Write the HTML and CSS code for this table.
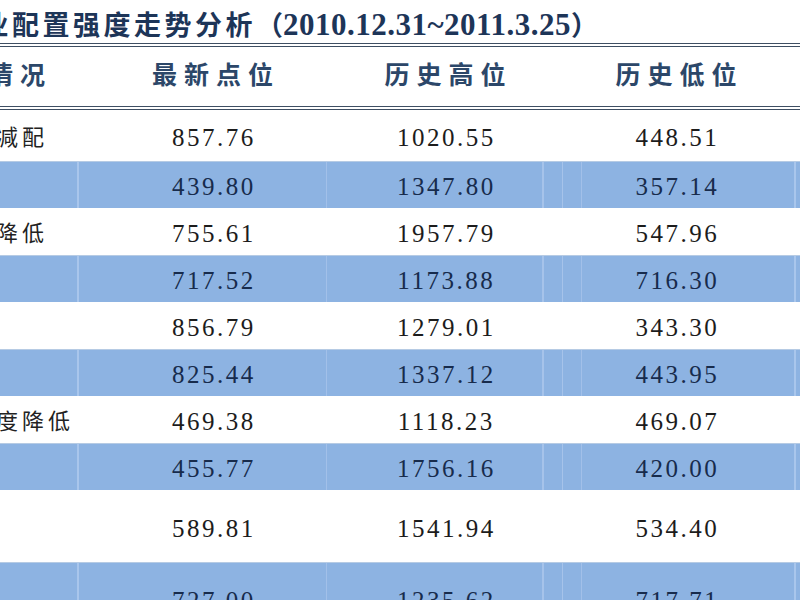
FILE: index.html
```html
<!DOCTYPE html>
<html lang="zh-CN">
<head>
<meta charset="utf-8">
<title>行业配置强度走势分析</title>
<link rel="stylesheet" href="styles.css">
</head>
<body>
<div class="page">
  <h1 class="title">行业配置强度走势分析<span class="paren">（</span><span class="en">2010.12.31~2011.3.25</span><span class="paren">）</span></h1>
  <div class="table">
    <div class="head">
      <div class="hcell first"><span>配置情况</span></div>
      <div class="hcell">最新点位</div>
      <div class="hcell">历史高位</div>
      <div class="hcell">历史低位</div>
    </div>
    <div class="row first-row">
      <div class="label"><span>大幅减配</span></div>
      <div class="num">857.76</div><div class="num">1020.55</div><div class="num">448.51</div>
    </div>
    <div class="row blue">
      <div class="label"></div>
      <div class="num">439.80</div><div class="num">1347.80</div><div class="num">357.14</div>
    </div>
    <div class="row">
      <div class="label"><span>大幅降低</span></div>
      <div class="num">755.61</div><div class="num">1957.79</div><div class="num">547.96</div>
    </div>
    <div class="row blue">
      <div class="label"></div>
      <div class="num">717.52</div><div class="num">1173.88</div><div class="num">716.30</div>
    </div>
    <div class="row">
      <div class="label"></div>
      <div class="num">856.79</div><div class="num">1279.01</div><div class="num">343.30</div>
    </div>
    <div class="row blue">
      <div class="label"></div>
      <div class="num">825.44</div><div class="num">1337.12</div><div class="num">443.95</div>
    </div>
    <div class="row">
      <div class="label"><span>大幅度降低</span></div>
      <div class="num">469.38</div><div class="num">1118.23</div><div class="num">469.07</div>
    </div>
    <div class="row blue">
      <div class="label"></div>
      <div class="num">455.77</div><div class="num">1756.16</div><div class="num">420.00</div>
    </div>
    <div class="row tall">
      <div class="label"></div>
      <div class="num">589.81</div><div class="num">1541.94</div><div class="num">534.40</div>
    </div>
    <div class="row blue tall">
      <div class="label"></div>
      <div class="num">727.00</div><div class="num">1235.62</div><div class="num">717.71</div>
    </div>
  </div>
</div>
</body>
</html>
```
FILE: styles.css
```css
html, body {
  margin: 0;
  padding: 0;
  background: #ffffff;
}

.page {
  width: 800px;
  height: 600px;
  overflow: hidden;
  background: #ffffff;
}

.title {
  margin: 0 0 0 -49px;
  padding: 9px 0 4px;
  height: 30px;
  line-height: 30px;
  font-family: "Noto Sans CJK SC", "Noto Sans CJK JP", sans-serif;
  font-weight: 700;
  font-size: 27px;
  letter-spacing: 3.5px;
  color: #1d3558;
  white-space: nowrap;
}

.title .paren {
  letter-spacing: 0;
}

.title .en {
  font-family: "Liberation Serif", "Times New Roman", serif;
  font-weight: 700;
  font-size: 31px;
  letter-spacing: 0.5px;
}

.table {
  width: 807px;
}

.head,
.row {
  display: grid;
  grid-template-columns: 80px 265px 200px 262px;
  align-items: center;
}

.head {
  border-top: 4px double #3f4f63;
  border-bottom: 4px double #3f4f63;
  height: 51px;
  padding-bottom: 8px;
  font-family: "Noto Sans CJK SC", "Noto Sans CJK JP", sans-serif;
  font-weight: 700;
  font-size: 25px;
  letter-spacing: 7px;
  color: #2c4769;
}

.hcell {
  text-align: center;
  padding-left: 7px;
  white-space: nowrap;
}

.hcell.first {
  text-align: left;
  padding-left: 0;
  overflow: hidden;
}

.hcell.first span {
  display: inline-block;
  margin-left: -76px;
}

.row {
  box-sizing: border-box;
  height: 47px;
  padding-top: 5px;
  font-family: "Liberation Serif", "Times New Roman", serif;
  font-size: 25px;
  letter-spacing: 2.5px;
  color: #1c1c1c;
}

.row.first-row {
  height: 51px;
}

.row.tall {
  height: 72px;
}

.row.blue {
  color: #172b4c;
  background-color: #8db3e2;
  background-image: linear-gradient(to right,
    transparent 77px, #a9c6ec 77px, #a9c6ec 79px, transparent 79px,
    transparent 326px, #a2c0e9 326px, #a2c0e9 327px, transparent 327px,
    transparent 542px, #a6c3ea 542px, #a6c3ea 544px, transparent 544px,
    transparent 562px, #a6c3ea 562px, #a6c3ea 563px, transparent 563px,
    transparent 581px, #a2c0e9 581px, #a2c0e9 582px, transparent 582px,
    transparent 794px, #a9c6ec 794px, #a9c6ec 796px, transparent 796px);
  box-shadow: inset 0 1px 0 #b6cbe4;
}

.num {
  text-align: center;
  padding-left: 2.5px;
  white-space: nowrap;
}

.label {
  overflow: hidden;
  white-space: nowrap;
  padding-bottom: 6px;
  font-family: "Noto Sans CJK SC", "Noto Sans CJK JP", sans-serif;
  font-size: 22px;
  letter-spacing: 4px;
  color: #222222;
}

.label span {
  display: inline-block;
  margin-left: -56px;
}
```
